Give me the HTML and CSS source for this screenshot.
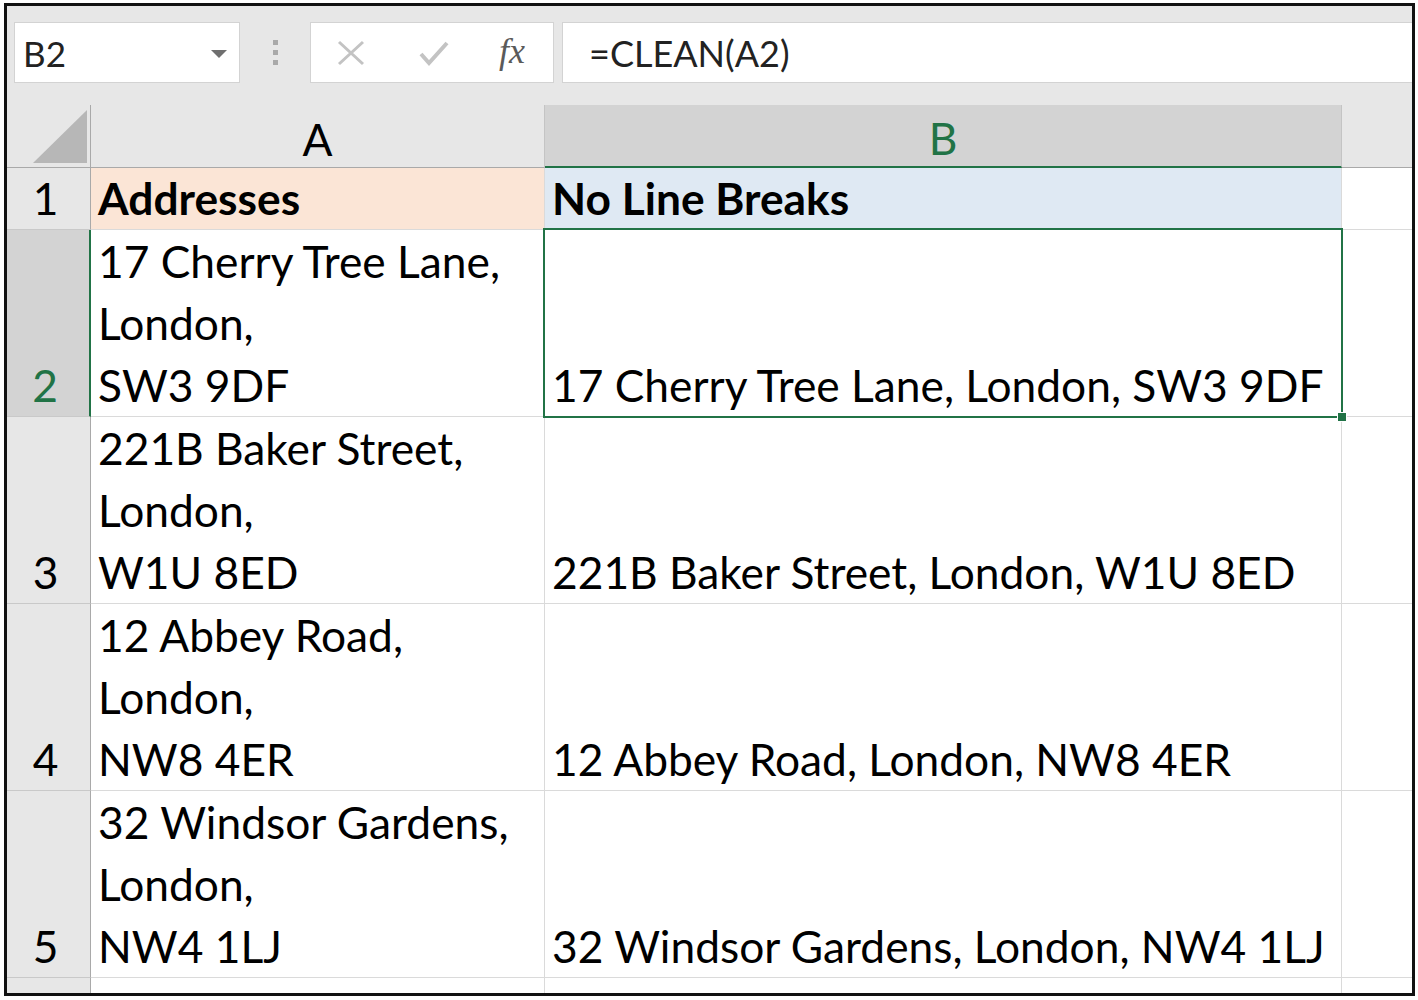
FILE: index.html
```html
<!DOCTYPE html>
<html lang="en">
<head>
<meta charset="utf-8">
<title>CLEAN function</title>
<link rel="stylesheet" href="styles.css">
</head>
<body>
<div class="frame">
  <div class="toolbar">
    <div class="namebox">
      <span class="ref">B2</span>
      <svg class="dd" width="16" height="8" viewBox="0 0 16 8"><polygon points="0,0 16,0 8,8" fill="#6f6f6f"/></svg>
    </div>
    <div class="grip"><i></i><i></i><i></i></div>
    <div class="fxbox">
      <svg class="ico" width="28" height="26" viewBox="0 0 28 26"><path d="M2 2 L26 24 M26 2 L2 24" stroke="#c3c3c3" stroke-width="3" fill="none"/></svg>
      <svg class="ico" width="30" height="26" viewBox="0 0 30 26"><path d="M2 14 L10 23 L28 3" stroke="#c3c3c3" stroke-width="4" fill="none"/></svg>
      <span class="fx">fx</span>
    </div>
    <div class="formula">=CLEAN(A2)</div>
  </div>
  <div class="sheet">
    <div class="corner"><svg width="84" height="63" viewBox="0 0 84 63"><polygon points="26,58 80,58 80,5" fill="#b7b7b7"/></svg></div>
    <div class="colhead">A</div>
    <div class="colhead sel">B</div>
    <div class="colhead last"></div>

    <div class="rowhead">1</div>
    <div class="cell hdr-a"><b>Addresses</b></div>
    <div class="cell hdr-b"><b>No Line Breaks</b></div>
    <div class="cell last"></div>

    <div class="rowhead sel">2</div>
    <div class="cell">17 Cherry Tree Lane,<br>London,<br>SW3 9DF</div>
    <div class="cell active">17 Cherry Tree Lane, London, SW3 9DF<span class="handle"></span></div>
    <div class="cell last"></div>

    <div class="rowhead">3</div>
    <div class="cell">221B Baker Street,<br>London,<br>W1U 8ED</div>
    <div class="cell">221B Baker Street, London, W1U 8ED</div>
    <div class="cell last"></div>

    <div class="rowhead">4</div>
    <div class="cell">12 Abbey Road,<br>London,<br>NW8 4ER</div>
    <div class="cell">12 Abbey Road, London, NW8 4ER</div>
    <div class="cell last"></div>

    <div class="rowhead">5</div>
    <div class="cell">32 Windsor Gardens,<br>London,<br>NW4 1LJ</div>
    <div class="cell">32 Windsor Gardens, London, NW4 1LJ</div>
    <div class="cell last"></div>

    <div class="rowhead stub"></div>
    <div class="cell stub"></div>
    <div class="cell stub"></div>
    <div class="cell stub last"></div>
  </div>
</div>
</body>
</html>
```

FILE: styles.css
```css
* { box-sizing: border-box; }
html, body { margin: 0; padding: 0; background: #ffffff; }
body { font-family: Lato, "Open Sans", sans-serif; color: #000; }

.frame {
  margin: 3px 0 0 4px;
  width: 1411px;
  height: 993px;
  border: 3px solid #111;
  background: #ffffff;
  display: flex;
  flex-direction: column;
  overflow: hidden;
}

.toolbar {
  height: 99px;
  flex: none;
  background: #e7e7e7;
  display: flex;
  align-items: flex-start;
  padding: 16px 0 0 7px;
}

.namebox {
  width: 226px;
  height: 61px;
  background: #fff;
  border: 1px solid #d3d3d3;
  display: flex;
  align-items: center;
  justify-content: space-between;
  padding: 0 12px 0 8px;
}
.ref { font-size: 35px; color: #222; }
.dd { margin-top: 2px; }

.grip {
  width: 70px;
  height: 61px;
  display: flex;
  flex-direction: column;
  justify-content: center;
  align-items: center;
  gap: 5px;
}
.grip i { display: block; width: 5px; height: 5px; background: #a9a9a9; }

.fxbox {
  width: 244px;
  height: 61px;
  background: #fff;
  border: 1px solid #d3d3d3;
  display: flex;
  align-items: center;
  padding-left: 26px;
}
.fxbox .ico:first-child { margin-right: 54px; }
.fxbox .ico:nth-child(2) { margin-right: 50px; }
.fx {
  font-family: "Liberation Serif", "DejaVu Serif", serif;
  font-style: italic;
  font-size: 36px;
  color: #5a5a5a;
  margin-top: -4px;
}

.formula {
  margin-left: 8px;
  flex: 1;
  height: 61px;
  background: #fff;
  border: 1px solid #d3d3d3;
  border-right: none;
  display: flex;
  align-items: center;
  padding-left: 26px;
  font-size: 36px;
  color: #222;
}

.sheet {
  flex: 1;
  display: grid;
  grid-template-columns: 84px 454px 797px 1fr;
  grid-template-rows: 63px 62px repeat(4, 187px) 1fr;
  font-size: 44.3px;
}

.corner {
  background: #e7e7e7;
  border-right: 1px solid #a9a9a9;
  border-bottom: 1px solid #a9a9a9;
}
.corner svg { display: block; }

.colhead {
  background: #e7e7e7;
  border-right: 1px solid #c4c4c4;
  border-bottom: 1px solid #a9a9a9;
  display: flex;
  align-items: center;
  justify-content: center;
  padding-top: 4px;
  color: #000;
}
.colhead.sel {
  background: #d3d3d3;
  color: #217346;
  border-bottom: 2px solid #217346;
}
.colhead.last { border-right: none; }

.rowhead {
  background: #e7e7e7;
  border-right: 1px solid #a9a9a9;
  border-bottom: 1px solid #c9c9c9;
  display: flex;
  align-items: flex-end;
  justify-content: center;
  padding: 0 6px 0 0;
  line-height: 62px;
}
.rowhead.sel {
  background: #d3d3d3;
  color: #217346;
  border-right: 2px solid #217346;
}
.rowhead.stub { border-bottom: none; }

.cell {
  border-right: 1px solid #dadada;
  border-bottom: 1px solid #dadada;
  display: flex;
  align-items: flex-end;
  padding: 0 0 0 7px;
  line-height: 62px;
  white-space: nowrap;
}
.cell.last { border-right: none; }
.cell.stub { border-bottom: none; }
.hdr-a { background: #fbe5d6; }
.hdr-b { background: #dfe9f3; }
.cell b { font-weight: 700; }

.active { position: relative; }
.active::after {
  content: "";
  position: absolute;
  left: -2px;
  top: -2px;
  right: -2px;
  bottom: -2px;
  border: 2px solid #217346;
  pointer-events: none;
}
.handle {
  position: absolute;
  right: -6px;
  bottom: -6px;
  width: 10px;
  height: 10px;
  background: #217346;
  border: 1px solid #fff;
  z-index: 2;
}
```
